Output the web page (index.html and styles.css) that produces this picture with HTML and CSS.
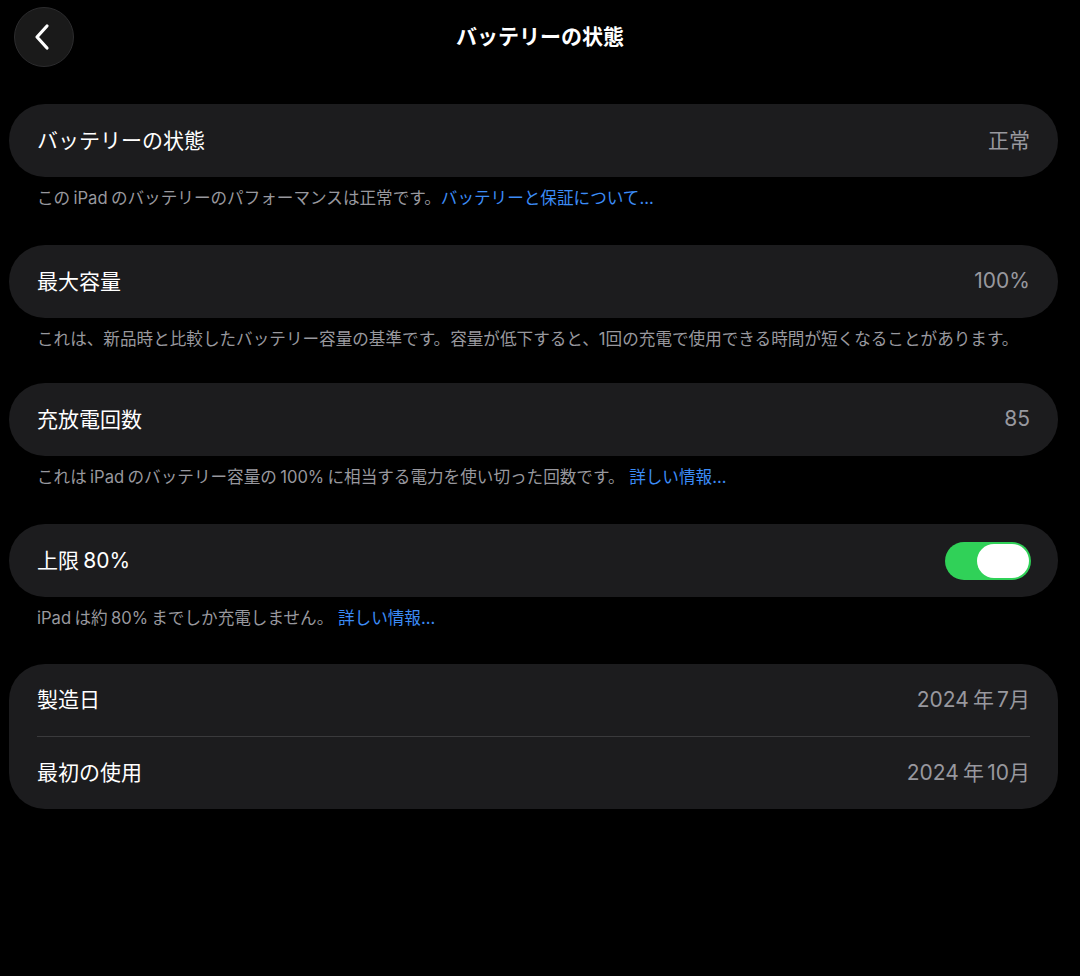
FILE: index.html
```html
<!DOCTYPE html>
<html lang="ja">
<head>
<meta charset="utf-8">
<link rel="stylesheet" href="styles.css">
</head>
<body>
<div class="page">
  <header class="nav">
    <button class="back" aria-label="戻る">
      <svg width="24" height="28" viewBox="0 0 24 28"><path d="M16 3 L6 14 L16 25" fill="none" stroke="#fff" stroke-width="3.2" stroke-linecap="round" stroke-linejoin="round"/></svg>
    </button>
    <h1 class="title">バッテリーの状態</h1>
  </header>

  <section class="group g1">
    <div class="card">
      <div class="row"><span class="label">バッテリーの状態</span><span class="value">正常</span></div>
    </div>
    <p class="foot">この<span class="lat">iPad</span>のバッテリーのパフォーマンスは正常です。<a class="link">バッテリーと保証について...</a></p>
  </section>

  <section class="group g2">
    <div class="card">
      <div class="row"><span class="label">最大容量</span><span class="value">100%</span></div>
    </div>
    <p class="foot">これは、新品時と比較したバッテリー容量の基準です。容量が低下すると、1回の充電で使用できる時間が短くなることがあります。</p>
  </section>

  <section class="group g3">
    <div class="card">
      <div class="row"><span class="label">充放電回数</span><span class="value">85</span></div>
    </div>
    <p class="foot">これは<span class="lat">iPad</span>のバッテリー容量の<span class="lat">100%</span>に相当する電力を使い切った回数です。 <a class="link">詳しい情報...</a></p>
  </section>

  <section class="group g4">
    <div class="card">
      <div class="row"><span class="label">上限<span class="lat">80%</span></span><span class="toggle"><span class="knob"></span></span></div>
    </div>
    <p class="foot"><span class="lat first">iPad</span>は約<span class="lat">80%</span>までしか充電しません。 <a class="link">詳しい情報...</a></p>
  </section>

  <section class="group g5">
    <div class="card multi">
      <div class="row sep"><span class="label">製造日</span><span class="value"><span class="lat first">2024</span>年<span class="lat last">7</span>月</span></div>
      <div class="row"><span class="label">最初の使用</span><span class="value"><span class="lat first">2024</span>年<span class="lat last">10</span>月</span></div>
    </div>
  </section>
</div>
</body>
</html>
```

FILE: styles.css
```css
* { box-sizing: border-box; }
html, body {
  margin: 0;
  padding: 0;
  background: #000;
  color: #fff;
  font-family: "Inter", "Noto Sans CJK JP", "Noto Sans", sans-serif;
}
.page {
  width: 1080px;
  height: 976px;
  padding: 7px 22px 0 9px;
}
.nav {
  display: flex;
  align-items: center;
  height: 60px;
  position: relative;
  margin-bottom: 37px;
}
.back {
  width: 60px;
  height: 60px;
  margin-left: 5px;
  border-radius: 50%;
  background: #1a1a1a;
  border: 1px solid #2c2c2e;
  display: flex;
  align-items: center;
  justify-content: center;
  padding: 0 3px 0 0;
}
.title {
  position: absolute;
  left: 0;
  right: -13px;
  top: 0;
  margin: 0;
  text-align: center;
  line-height: 60px;
  font-size: 21px;
  font-weight: 700;
  pointer-events: none;
}
.group { margin-bottom: 35px; }
.g1 { margin-bottom: 36px; }
.g2 { margin-bottom: 33px; }
.g3 { margin-bottom: 36px; }
.g4 { margin-bottom: 35px; }
.card {
  background: #1c1c1e;
  border-radius: 36px;
  padding: 0 28px;
}
.row {
  height: 73px;
  display: flex;
  align-items: center;
  justify-content: space-between;
  padding-bottom: 3px;
}
.multi .row { height: 72.5px; }
.row.sep { border-bottom: 1px solid #3a3a3c; }
.label {
  font-size: 21px;
  color: #fff;
}
.value {
  font-size: 21px;
  color: #98989e;
}
.lat { margin: 0 0.2em; }
.lat.first { margin-left: 0; }
.lat.last { margin-right: 0; margin-left: 0.15em; }
.foot {
  margin: 11px 0 0 28px;
  font-size: 16.6px;
  line-height: 21px;
  color: #98989e;
}
.link {
  color: #3c8cf6;
}
.toggle {
  width: 86px;
  height: 38px;
  border-radius: 19px;
  background: #30d158;
  display: flex;
  align-items: center;
  justify-content: flex-end;
  padding: 0 2px;
  margin-right: -1px;
  margin-top: 3px;
}
.knob {
  width: 52px;
  height: 34px;
  border-radius: 17px;
  background: #fff;
}
```
